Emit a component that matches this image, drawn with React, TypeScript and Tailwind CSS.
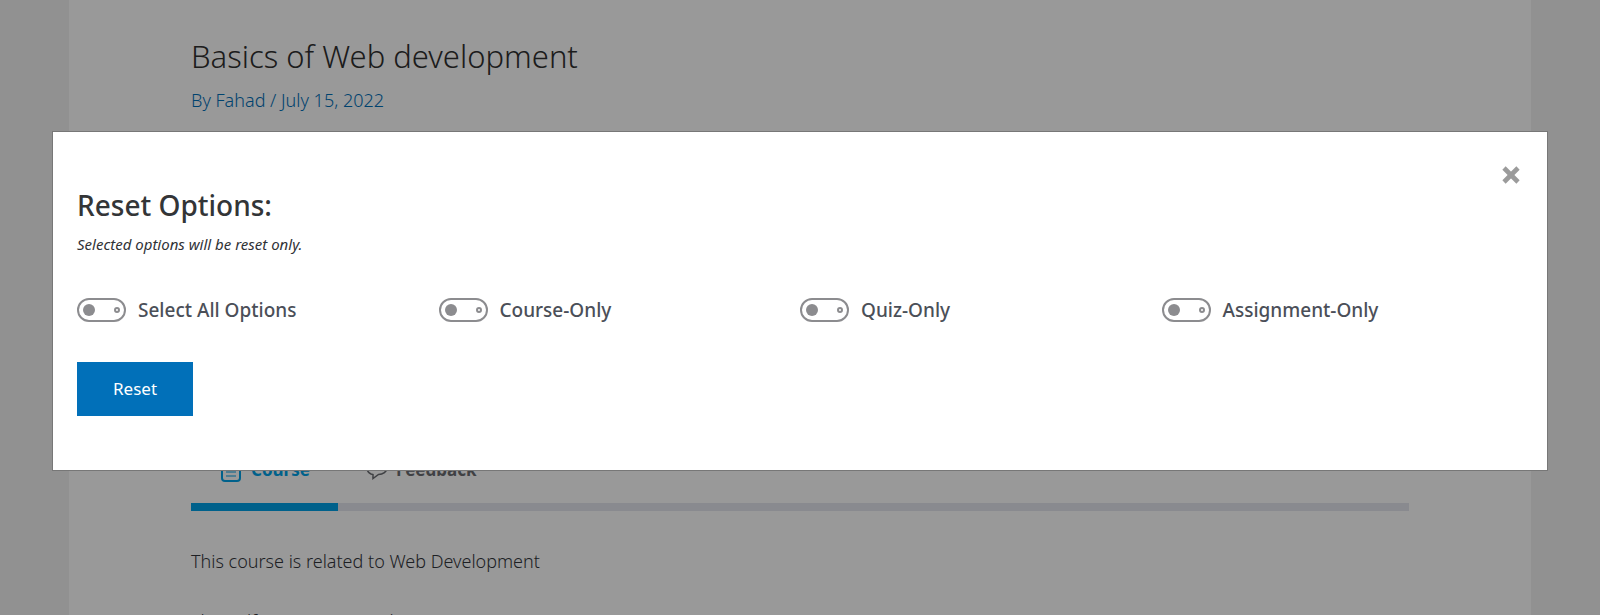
import React, { useState } from 'react';
import { X } from 'lucide-react';

interface OptionToggleProps {
  id: string;
  label: string;
  checked: boolean;
  onChange: (checked: boolean) => void;
}

/** Pill switch with a filled knob and a small ring on the other side */
const OptionToggle: React.FC<OptionToggleProps> = ({ id, label, checked, onChange }) => (
  <div className="flex items-center gap-3">
    <input
      id={id}
      type="checkbox"
      checked={checked}
      onChange={(e) => onChange(e.target.checked)}
      className="flex h-6 w-[49px] shrink-0 cursor-pointer appearance-none items-center justify-between rounded-full border-2 border-[#8c8c8f] bg-white px-1 before:size-3 before:rounded-full before:bg-[#8c8c8f] after:size-[6px] after:rounded-full after:border-2 after:border-[#8c8c8f] checked:flex-row-reverse checked:border-[#0170b9] checked:before:bg-[#0170b9]"
    />
    <label htmlFor={id} className="cursor-pointer text-[19px] leading-7 font-medium text-[#4b4f58]">
      {label}
    </label>
  </div>
);

const options = [
  { id: 'course', label: 'Course-Only' },
  { id: 'quiz', label: 'Quiz-Only' },
  { id: 'assignment', label: 'Assignment-Only' },
];

const ResetDialog: React.FC = () => {
  const [selected, setSelected] = useState<string[]>([]);
  const allSelected = selected.length === options.length;

  const toggle = (id: string, checked: boolean) => {
    setSelected((prev) => (checked ? [...prev, id] : prev.filter((item) => item !== id)));
  };

  return (
    <div
      role="dialog"
      aria-labelledby="reset-title"
      className="relative border border-[#777] bg-white px-6 pt-[53px] pb-[54px]"
    >
      <button type="button" aria-label="Close" className="absolute top-[29px] right-[22px] cursor-pointer text-[#9b9b9b]">
        <X size={28} strokeWidth={4} strokeLinecap="butt" />
      </button>
      <h2 id="reset-title" className="text-[28px] leading-10 font-medium text-[#333537]">
        Reset Options:
      </h2>
      <p className="mt-[7px] text-[15px] leading-6 text-[#303236] italic">Selected options will be reset only.</p>
      <div className="mt-10 grid grid-cols-4">
        <OptionToggle
          id="all"
          label="Select All Options"
          checked={allSelected}
          onChange={(checked) => setSelected(checked ? options.map((o) => o.id) : [])}
        />
        {options.map((option) => (
          <OptionToggle
            key={option.id}
            id={option.id}
            label={option.label}
            checked={selected.includes(option.id)}
            onChange={(checked) => toggle(option.id, checked)}
          />
        ))}
      </div>
      <button type="button" className="mt-[38px] cursor-pointer bg-[#0170b9] px-9 py-3 text-[17px] leading-[30px] text-white">
        Reset
      </button>
    </div>
  );
};

const CoursePage: React.FC = () => (
  <main className="mx-[69px] min-h-screen bg-white px-[122px] pt-[35px]">
    <h1 className="text-[31px] leading-[42px] font-light text-[#303030]">Basics of Web development</h1>
    <p className="mt-[9px] text-[18px] leading-7 font-light text-[#0170b9]">
      By <a href="#author">Fahad</a> / July 15, 2022
    </p>
    <div className="mt-[342px] flex border-b-8 border-[#e4e6ee] text-[17px] leading-7 font-bold">
      <button type="button" className="-mb-2 flex h-[55px] items-start gap-2 border-b-8 border-[#00a2e8] px-7 text-[#00a2e8]">
        <svg width="24" height="28" viewBox="0 0 24 28" fill="none" stroke="currentColor" strokeWidth="2">
          <rect x="3" y="4" width="18" height="21" rx="3" />
          <path d="M7 12h10M7 16h10M7 20h10" strokeWidth="1" />
        </svg>
        Course
      </button>
      <button type="button" className="flex items-start gap-2 px-7 text-[#6b6d72]">
        <svg width="22" height="28" viewBox="0 0 22 28" fill="none" stroke="currentColor" strokeWidth="1.5">
          <path d="M5 18C2 16.500 1 14.500 1 12C1 8.500 5 5 11 5s10 3.500 10 7-4 6.500-8.500 6.500L7 22.500V18.500z" />
        </svg>
        Feedback
      </button>
    </div>
    <p className="mt-[34px] text-[18px] leading-8 font-light text-[#33363c]">This course is related to Web Development</p>
    <p className="mt-7 text-[18px] leading-8 font-light text-[#33363c]">This self-run course can be seen</p>
  </main>
);

const App: React.FC = () => (
  <div className="h-screen overflow-hidden bg-[#f2f2f2] font-['Noto_Sans','Open_Sans',sans-serif]">
    <CoursePage />
    <div className="fixed inset-0 bg-black/40 px-[52px] pt-[131px]">
      <ResetDialog />
    </div>
  </div>
);

export default App;
